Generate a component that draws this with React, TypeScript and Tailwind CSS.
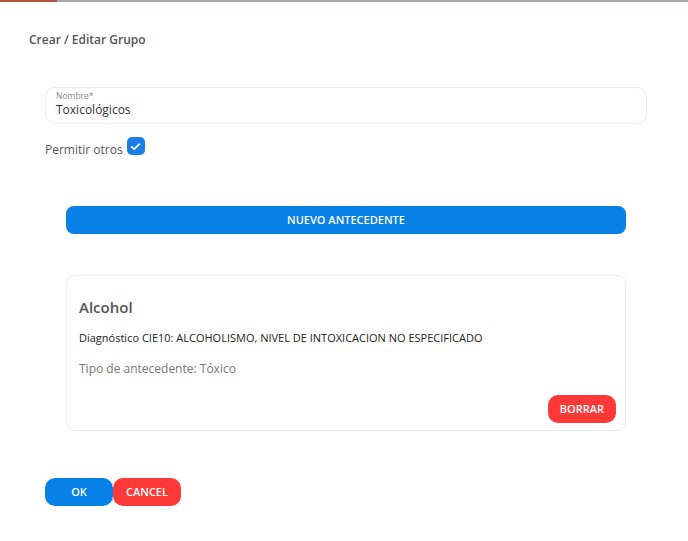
import React from "react";

export default function App() {
  return (
    <div className="w-[688px] h-[541px] bg-white relative overflow-hidden" style={{ fontFamily: '"Open Sans", "Noto Sans", sans-serif' }}>
      <div className="flex h-[2px] w-full">
        <div className="w-[57px] bg-[#b5533f]" />
        <div className="flex-1 bg-[#a4a7ad]" />
      </div>
      <div className="px-[29px] pt-[29px]">
        <div className="text-[12px] font-semibold text-[#555] leading-[18px]">Crear / Editar Grupo</div>
      </div>
      <div className="pl-[45px] pr-[41px] pt-[38px]">
        <div className="h-[37px] border border-[#ececec] rounded-[10px] px-[10px] pt-[3px] flex flex-col">
          <span className="text-[8.5px] leading-[10px] text-[#8a8a8a]">Nombre*</span>
          <span className="text-[12px] leading-[14px] text-[#333] mt-[2px]">Toxicológicos</span>
        </div>
        <div className="flex items-start mt-[13px] h-[20px]">
          <span className="text-[12px] leading-[16px] text-[#555] mr-[4px] mt-[5px]">Permitir otros</span>
          <div className="w-[18px] h-[18px] rounded-[5px] bg-[#1a7ee6] flex items-center justify-center">
            <svg width="13" height="13" viewBox="0 0 24 24" fill="none" stroke="white" strokeWidth="3.2" strokeLinecap="round" strokeLinejoin="round">
              <path d="M5 12.5l4.5 4.5L19 7.5" />
            </svg>
          </div>
        </div>
      </div>
      <div className="pl-[66px] pr-[62px] pt-[49px]">
        <div className="h-[28px] rounded-[8px] bg-[#0780e8] flex items-center justify-center text-white text-[11px] font-semibold">NUEVO ANTECEDENTE</div>
      </div>
      <div className="pl-[66px] pr-[62px] pt-[41px]">
        <div className="h-[156px] border border-[#ececec] rounded-[8px] px-[12px] pt-[20px] flex flex-col">
          <div className="text-[15px] font-semibold text-[#555] leading-[22px]">Alcohol</div>
          <div className="text-[11px] text-[#222] leading-[16px] mt-[12px]">Diagnóstico CIE10: ALCOHOLISMO, NIVEL DE INTOXICACION NO ESPECIFICADO</div>
          <div className="text-[12px] text-[#777] leading-[16px] mt-[15px]">Tipo de antecedente: Tóxico</div>
          <div className="flex justify-end mt-[18px]">
            <div className="w-[68px] h-[28px] rounded-[10px] bg-[#ff3838] flex items-center justify-center text-white text-[11px] font-semibold mr-[-3px]">BORRAR</div>
          </div>
        </div>
      </div>
      <div className="flex pl-[45px] pt-[47px]">
        <div className="w-[68px] h-[28px] rounded-[10px] bg-[#0780e8] flex items-center justify-center text-white text-[11px] font-semibold">OK</div>
        <div className="w-[68px] h-[28px] rounded-[10px] bg-[#ff3838] flex items-center justify-center text-white text-[11px] font-semibold">CANCEL</div>
      </div>
    </div>
  );
}
